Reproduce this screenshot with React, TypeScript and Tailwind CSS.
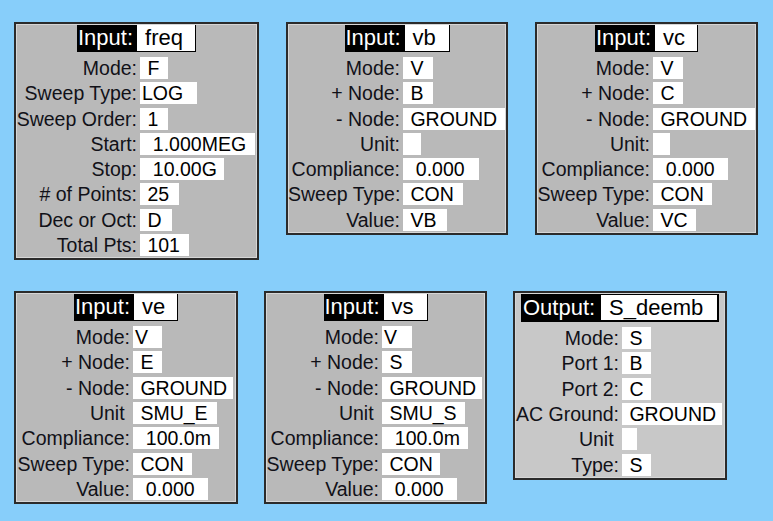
import React from 'react';

type Row = { label: string; value: string; w: string };

type Panel = {
  kind: 'Input' | 'Output';
  name: string;
  nameW: string;
  width: string;
  labelCol: string;
  rows: Row[];
};

const NB = '\u00a0';

const top: Panel[] = [
  {
    kind: 'Input',
    name: 'freq',
    nameW: 'w-[58px]',
    width: 'w-[245px]',
    labelCol: 'grid-cols-[121px_auto]',
    rows: [
      { label: 'Mode:', value: NB + 'F', w: 'w-[28px]' },
      { label: 'Sweep Type:', value: 'LOG', w: 'w-[57px]' },
      { label: 'Sweep Order:', value: NB + '1', w: 'w-[28px]' },
      { label: 'Start:', value: NB + NB + '1.000MEG', w: 'w-[115px]' },
      { label: 'Stop:', value: NB + NB + '10.00G', w: 'w-[84px]' },
      { label: '# of Points:', value: NB + '25', w: 'w-[39px]' },
      { label: 'Dec or Oct:', value: NB + 'D', w: 'w-[32px]' },
      { label: 'Total Pts:', value: NB + '101', w: 'w-[49px]' },
    ],
  },
  {
    kind: 'Input',
    name: 'vb',
    nameW: 'w-[44px]',
    width: 'w-[222px]',
    labelCol: 'grid-cols-[112px_auto]',
    rows: [
      { label: 'Mode:', value: NB + 'V', w: 'w-[30px]' },
      { label: '+ Node:', value: NB + 'B', w: 'w-[30px]' },
      { label: '- Node:', value: NB + 'GROUND', w: 'w-[102px]' },
      { label: 'Unit:', value: '', w: 'w-[18px]' },
      { label: 'Compliance:', value: NB + NB + '0.000', w: 'w-[76px]' },
      { label: 'Sweep Type:', value: NB + 'CON', w: 'w-[60px]' },
      { label: 'Value:', value: NB + 'VB', w: 'w-[44px]' },
    ],
  },
  {
    kind: 'Input',
    name: 'vc',
    nameW: 'w-[42px]',
    width: 'w-[223px]',
    labelCol: 'grid-cols-[113px_auto]',
    rows: [
      { label: 'Mode:', value: NB + 'V', w: 'w-[30px]' },
      { label: '+ Node:', value: NB + 'C', w: 'w-[30px]' },
      { label: '- Node:', value: NB + 'GROUND', w: 'w-[102px]' },
      { label: 'Unit:', value: '', w: 'w-[17px]' },
      { label: 'Compliance:', value: NB + NB + '0.000', w: 'w-[75px]' },
      { label: 'Sweep Type:', value: NB + 'CON', w: 'w-[59px]' },
      { label: 'Value:', value: NB + 'VC', w: 'w-[43px]' },
    ],
  },
];

const bottom: Panel[] = [
  {
    kind: 'Input',
    name: 've',
    nameW: 'w-[43px]',
    width: 'w-[224px]',
    labelCol: 'grid-cols-[114px_auto]',
    rows: [
      { label: 'Mode:', value: 'V', w: 'w-[29px]' },
      { label: '+ Node:', value: NB + 'E', w: 'w-[29px]' },
      { label: '- Node:', value: NB + 'GROUND', w: 'w-[100px]' },
      { label: 'Unit' + NB, value: NB + 'SMU_E', w: 'w-[84px]' },
      { label: 'Compliance:', value: NB + NB + '100.0m', w: 'w-[86px]' },
      { label: 'Sweep Type:', value: NB + 'CON', w: 'w-[59px]' },
      { label: 'Value:', value: NB + NB + '0.000', w: 'w-[75px]' },
    ],
  },
  {
    kind: 'Input',
    name: 'vs',
    nameW: 'w-[43px]',
    width: 'w-[223px]',
    labelCol: 'grid-cols-[113px_auto]',
    rows: [
      { label: 'Mode:', value: 'V', w: 'w-[30px]' },
      { label: '+ Node:', value: NB + 'S', w: 'w-[30px]' },
      { label: '- Node:', value: NB + 'GROUND', w: 'w-[100px]' },
      { label: 'Unit' + NB, value: NB + 'SMU_S', w: 'w-[83px]' },
      { label: 'Compliance:', value: NB + NB + '100.0m', w: 'w-[86px]' },
      { label: 'Sweep Type:', value: NB + 'CON', w: 'w-[58px]' },
      { label: 'Value:', value: NB + NB + '0.000', w: 'w-[75px]' },
    ],
  },
  {
    kind: 'Output',
    name: 'S_deemb',
    nameW: 'w-[116px]',
    width: 'w-[214px]',
    labelCol: 'grid-cols-[104px_auto]',
    rows: [
      { label: 'Mode:', value: NB + 'S', w: 'w-[29px]' },
      { label: 'Port 1:', value: NB + 'B', w: 'w-[29px]' },
      { label: 'Port 2:', value: NB + 'C', w: 'w-[29px]' },
      { label: 'AC Ground:', value: NB + 'GROUND', w: 'w-[100px]' },
      { label: 'Unit' + NB, value: '', w: 'w-[15px]' },
      { label: 'Type:', value: NB + 'S', w: 'w-[29px]' },
    ],
  },
];

const Title: React.FC<{ p: Panel }> = ({ p }) => {
  if (p.kind === 'Output') {
    return (
      <div className="flex justify-center">
        <div className="flex h-[28px] items-start bg-black pt-px pr-[2px]">
          <span className="w-[80px] pl-[2px] text-[22px] leading-[26px] text-white">Output:</span>
          <span className={`${p.nameW} h-[25px] bg-white pl-[2px] text-[22px] leading-[25px] text-black`}>
            {NB + p.name}
          </span>
        </div>
      </div>
    );
  }
  return (
    <div className="flex justify-center">
      <div className="flex h-[27px] bg-black pr-px pb-px">
        <span className="w-[60px] pl-[1px] text-[22px] leading-[26px] text-white">Input:</span>
        <span className={`${p.nameW} h-[26px] bg-white pl-[2px] text-[22px] leading-[26px] text-black`}>
          {NB + p.name}
        </span>
      </div>
    </div>
  );
};

const Box: React.FC<{ p: Panel }> = ({ p }) => {
  const bg = p.kind === 'Output' ? 'bg-[#c8c8c8]' : 'bg-[#b9b9b9]';
  return (
    <div
      className={`${p.width} ${bg} border-2 border-[#2b2b2b] pt-px pb-[2px] shadow-[inset_0_0_0_1px_#d6d6d6]`}
    >
      <Title p={p} />
      <div className={`mt-[5px] grid ${p.labelCol} gap-x-[3px] gap-y-[3.3px]`}>
        {p.rows.map((r, i) => (
          <React.Fragment key={i}>
            <div className="h-[22px] whitespace-nowrap text-right text-[19.5px] leading-[22px] text-[#111118]">
              {r.label}
            </div>
            <div className={`${r.w} h-[22px] whitespace-pre bg-white pl-[2px] text-[19.5px] leading-[22px] text-black`}>
              {r.value}
            </div>
          </React.Fragment>
        ))}
      </div>
    </div>
  );
};

export default function App() {
  return (
    <div className="h-[521px] w-[773px] overflow-hidden bg-[#87cefa] font-['Liberation_Sans',Arial,sans-serif]">
      <div className="flex items-start gap-[27px] pl-[14px] pt-[22px]">
        {top.map((p) => (
          <Box key={p.name} p={p} />
        ))}
      </div>
      <div className="mt-[31px] flex items-start gap-[26px] pl-[14px]">
        {bottom.map((p) => (
          <Box key={p.name} p={p} />
        ))}
      </div>
    </div>
  );
}
